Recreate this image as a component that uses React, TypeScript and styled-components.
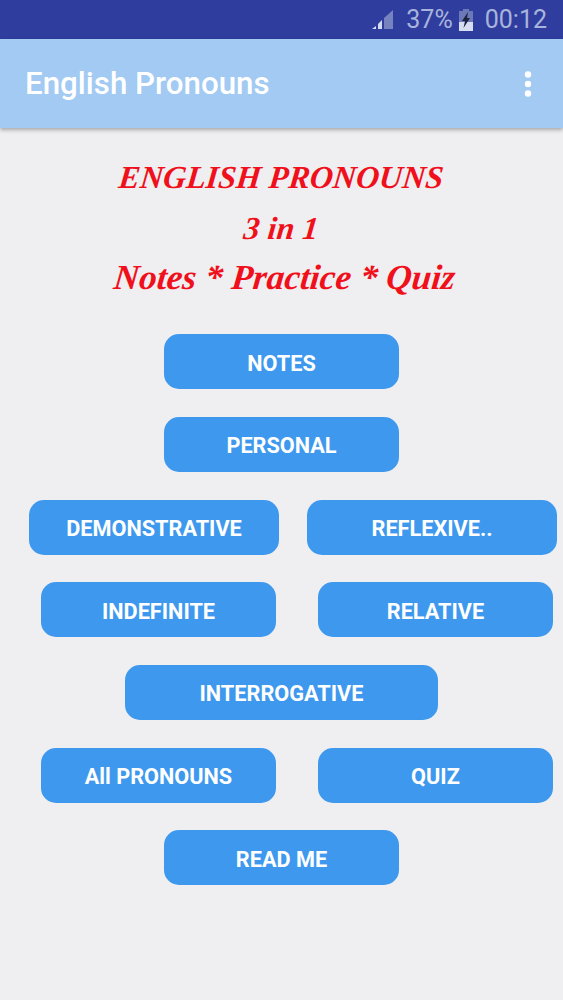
import React from "react";
import styled, { createGlobalStyle } from "styled-components";

const Global = createGlobalStyle`
  html, body { margin: 0; padding: 0; background: #efeff1; }
  body { font-family: Roboto, "Liberation Sans", sans-serif; }
`;

const Screen = styled.div`
  width: 563px;
  height: 1000px;
  overflow: hidden;
  display: flex;
  flex-direction: column;
  background: #efeff1;
`;

const StatusBar = styled.div`
  height: 39px;
  flex: none;
  background: #2f3e9e;
  color: #a9b4dc;
  display: flex;
  align-items: center;
  justify-content: flex-end;
  padding-right: 16px;
  font-size: 25px;
`;

const Percent = styled.span`
  margin-left: 12px;
`;

const Clock = styled.span`
  margin-left: 11px;
`;

const BatteryIcon = styled.svg`
  margin-left: 5px;
`;

const AppBar = styled.header`
  height: 89px;
  flex: none;
  background: #a2caf2;
  box-shadow: 0 2px 4px rgba(0, 0, 0, 0.3);
  display: flex;
  align-items: center;
  justify-content: space-between;
  padding: 0 31px 0 25px;
  color: #fff;
`;

const AppTitle = styled.h1`
  margin: 0;
  font-size: 31.3px;
  font-weight: 500;
`;

const Heading = styled.div`
  margin-top: 24px;
  display: flex;
  flex-direction: column;
  align-items: center;
  color: #f0101c;
  font-family: "Liberation Serif", serif;
  font-style: italic;
  font-weight: 700;
  line-height: 50.5px;
`;

const HeadingLine = styled.div<{ $size: number; $shift?: number }>`
  font-size: ${(p) => p.$size}px;
  padding-left: ${(p) => p.$shift ?? 0}px;
  transform: skewX(-6deg);
`;

const ButtonStack = styled.main`
  margin-top: 30.7px;
  display: flex;
  flex-direction: column;
  gap: 27.7px;
`;

const Row = styled.div<{ $pad?: number; $gap?: number }>`
  display: flex;
  justify-content: ${(p) => (p.$pad ? "flex-start" : "center")};
  padding-left: ${(p) => p.$pad ?? 0}px;
  gap: ${(p) => p.$gap ?? 0}px;
`;

const Btn = styled.button<{ $w: number }>`
  width: ${(p) => p.$w}px;
  height: 55px;
  border: 0;
  border-radius: 15px;
  background: #3e99ee;
  color: #fff;
  font-family: Roboto, "Liberation Sans", sans-serif;
  font-size: 21.7px;
  font-weight: 700;
  padding: 3px 0 0;
`;

export default function App() {
  return (
    <Screen>
      <Global />
      <StatusBar>
        <svg width="22" height="22" viewBox="0 0 22 22">
          <path d="M0 20 L4 20 L4 17 Z" fill="#d5dbef" />
          <path d="M6 20 H10 V11 L6 15 Z" fill="#d5dbef" />
          <path d="M12 20 H21 V1 L12 9 Z" fill="#7683bf" />
        </svg>
        <Percent>37%</Percent>
        <BatteryIcon width="16" height="24" viewBox="0 0 16 24">
          <path d="M5 1 H11 V3 H15 V23 H1 V3 H5 Z" fill="#6c79b8" />
          <path d="M1 14 H15 V23 H1 Z" fill="#d8def2" />
          <path d="M10 4 L4 13 H7 L5.5 20 L12 10 H9 Z" fill="#1c2340" />
        </BatteryIcon>
        <Clock>00:12</Clock>
      </StatusBar>
      <AppBar>
        <AppTitle>English Pronouns</AppTitle>
        <svg width="8" height="26" viewBox="0 0 8 26">
          <circle cx="4" cy="3.5" r="3.2" fill="#fff" />
          <circle cx="4" cy="13" r="3.2" fill="#fff" />
          <circle cx="4" cy="22.5" r="3.2" fill="#fff" />
        </svg>
      </AppBar>
      <Heading>
        <HeadingLine $size={32}>ENGLISH PRONOUNS</HeadingLine>
        <HeadingLine $size={32}>3 in 1</HeadingLine>
        <HeadingLine $size={35.3} $shift={6}>Notes * Practice * Quiz</HeadingLine>
      </Heading>
      <ButtonStack>
        <Row><Btn $w={235}>NOTES</Btn></Row>
        <Row><Btn $w={235}>PERSONAL</Btn></Row>
        <Row $pad={29} $gap={28}>
          <Btn $w={250}>DEMONSTRATIVE</Btn>
          <Btn $w={250}>REFLEXIVE..</Btn>
        </Row>
        <Row $pad={41} $gap={42}>
          <Btn $w={235}>INDEFINITE</Btn>
          <Btn $w={235}>RELATIVE</Btn>
        </Row>
        <Row><Btn $w={313}>INTERROGATIVE</Btn></Row>
        <Row $pad={41} $gap={42}>
          <Btn $w={235}>All PRONOUNS</Btn>
          <Btn $w={235}>QUIZ</Btn>
        </Row>
        <Row><Btn $w={235}>READ ME</Btn></Row>
      </ButtonStack>
    </Screen>
  );
}
